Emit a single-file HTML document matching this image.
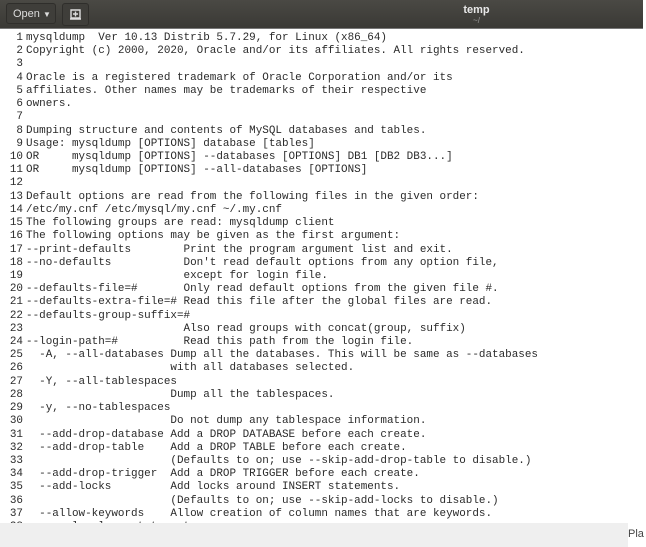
<!DOCTYPE html>
<html><head><style>
body{margin:0;width:646px;height:547px;overflow:hidden;background:#fff;position:relative;font-family:"Liberation Sans",sans-serif}
.hd{position:absolute;left:0;top:0;width:643px;height:28px;background:linear-gradient(#4a4944,#3a3935);border-bottom:1px solid #777}
.btn{position:absolute;top:3px;height:21px;border:1px solid #2f2e2b;border-radius:3px;background:#3f3e3a;color:#ddd;font-size:11px;line-height:21px}
.title{position:absolute;left:0;width:643px;top:4px;text-align:center;color:#e8e8e8;font-size:11px;font-weight:bold;padding-left:310px;box-sizing:border-box}
.sub{position:absolute;top:16px;left:0;width:643px;text-align:center;color:#999;font-size:8px;padding-left:310px;box-sizing:border-box}
.ed{position:absolute;top:32px;left:0;font-family:"Liberation Mono",monospace;font-size:10.95px;line-height:13.22px;color:#2a2a2a;white-space:pre}
.n{display:inline-block;width:23px;text-align:right;padding-right:3px;color:#2a2a2a}
.st{position:absolute;left:0;top:523px;width:628px;height:24px;background:#efefef}
.pla{position:absolute;left:628px;top:528px;font-size:11px;color:#444}
</style></head><body>
<div class="hd">
<div class="btn" style="left:6px;width:50px;padding-left:6px;box-sizing:border-box">Open <span style="font-size:8px">▼</span></div>
<div class="btn" style="left:62px;width:25px"><svg width="25" height="21" viewBox="0 0 25 21"><path d="M8 6h9v8H8zM12.5 7.5v5M10 10h5M7 15h11" stroke="#ddd" stroke-width="1.4" fill="none"/></svg></div>
<div class="title">temp</div><div class="sub">~/</div>
</div>
<div class="ed"><span class="n">1</span>mysqldump  Ver 10.13 Distrib 5.7.29, for Linux (x86_64)
<span class="n">2</span>Copyright (c) 2000, 2020, Oracle and/or its affiliates. All rights reserved.
<span class="n">3</span>
<span class="n">4</span>Oracle is a registered trademark of Oracle Corporation and/or its
<span class="n">5</span>affiliates. Other names may be trademarks of their respective
<span class="n">6</span>owners.
<span class="n">7</span>
<span class="n">8</span>Dumping structure and contents of MySQL databases and tables.
<span class="n">9</span>Usage: mysqldump [OPTIONS] database [tables]
<span class="n">10</span>OR     mysqldump [OPTIONS] --databases [OPTIONS] DB1 [DB2 DB3...]
<span class="n">11</span>OR     mysqldump [OPTIONS] --all-databases [OPTIONS]
<span class="n">12</span>
<span class="n">13</span>Default options are read from the following files in the given order:
<span class="n">14</span>/etc/my.cnf /etc/mysql/my.cnf ~/.my.cnf
<span class="n">15</span>The following groups are read: mysqldump client
<span class="n">16</span>The following options may be given as the first argument:
<span class="n">17</span>--print-defaults        Print the program argument list and exit.
<span class="n">18</span>--no-defaults           Don't read default options from any option file,
<span class="n">19</span>                        except for login file.
<span class="n">20</span>--defaults-file=#       Only read default options from the given file #.
<span class="n">21</span>--defaults-extra-file=# Read this file after the global files are read.
<span class="n">22</span>--defaults-group-suffix=#
<span class="n">23</span>                        Also read groups with concat(group, suffix)
<span class="n">24</span>--login-path=#          Read this path from the login file.
<span class="n">25</span>  -A, --all-databases Dump all the databases. This will be same as --databases
<span class="n">26</span>                      with all databases selected.
<span class="n">27</span>  -Y, --all-tablespaces
<span class="n">28</span>                      Dump all the tablespaces.
<span class="n">29</span>  -y, --no-tablespaces
<span class="n">30</span>                      Do not dump any tablespace information.
<span class="n">31</span>  --add-drop-database Add a DROP DATABASE before each create.
<span class="n">32</span>  --add-drop-table    Add a DROP TABLE before each create.
<span class="n">33</span>                      (Defaults to on; use --skip-add-drop-table to disable.)
<span class="n">34</span>  --add-drop-trigger  Add a DROP TRIGGER before each create.
<span class="n">35</span>  --add-locks         Add locks around INSERT statements.
<span class="n">36</span>                      (Defaults to on; use --skip-add-locks to disable.)
<span class="n">37</span>  --allow-keywords    Allow creation of column names that are keywords.
<span class="n">38</span>  --apply-slave-statements</div>
<div class="st"></div><div class="pla">Pla</div>
</body></html>
